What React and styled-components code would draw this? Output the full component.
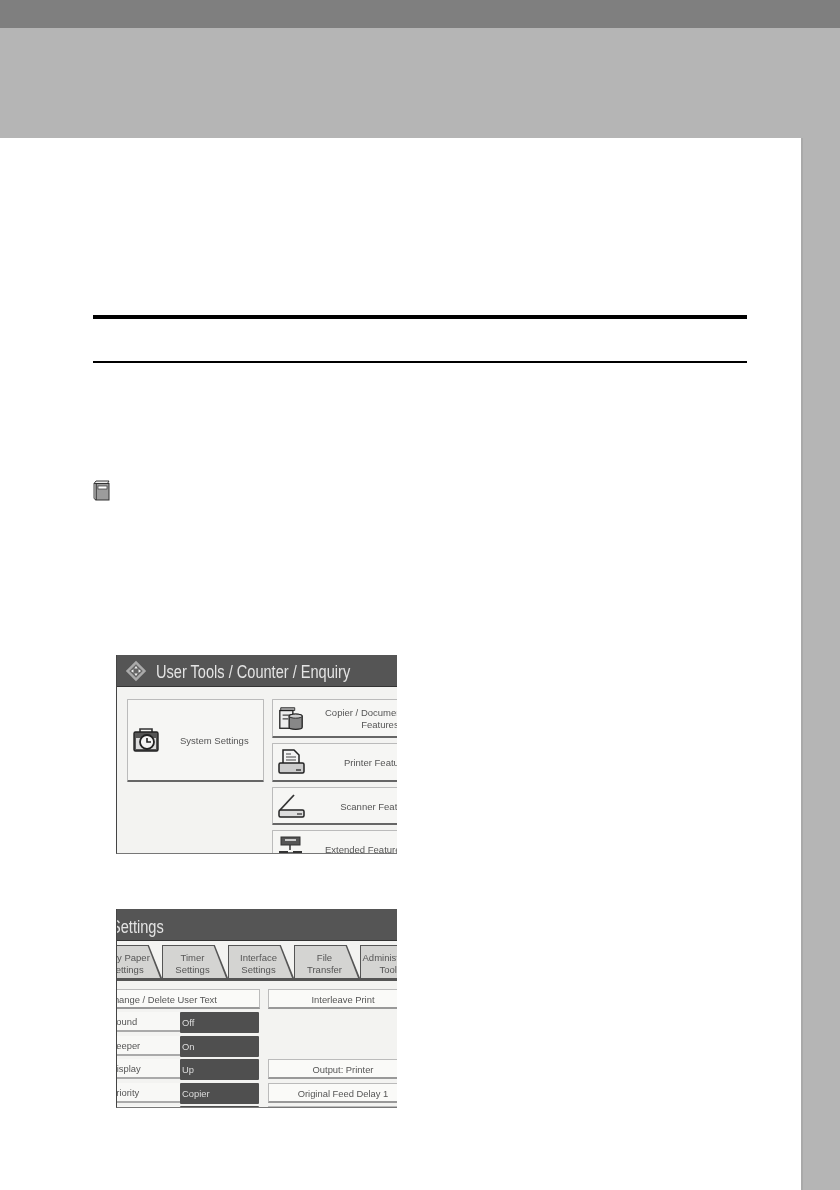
import styled, { createGlobalStyle } from "styled-components";

const Global = createGlobalStyle`
  html, body {
    margin: 0;
    padding: 0;
    background: #fff;
  }
  body {
    font-family: "Liberation Sans", Arial, sans-serif;
  }
`;

const Sheet = styled.div`
  width: 840px;
  height: 1190px;
  display: flex;
  flex-direction: column;
  overflow: hidden;
`;

const TopBar = styled.div`
  height: 28px;
  flex: none;
  background: #7f7f7f;
`;

const Band = styled.div`
  height: 110px;
  flex: none;
  background: #b5b5b5;
`;

const Body = styled.div`
  flex: 1;
  display: flex;
`;

const Page = styled.main`
  width: 654px;
  padding: 177px 54px 0 93px;
`;

const Side = styled.aside`
  flex: 1;
  background: #b5b5b5;
  border-left: 2px solid #a9a9a9;
`;

const Rule = styled.hr`
  margin: 0;
  border: 0;
  background: #000;
  height: ${(p) => p.$h}px;
  margin-bottom: ${(p) => p.$after}px;
`;

const BookIcon = styled.svg`
  display: block;
  width: 17px;
  height: 21px;
  margin-bottom: 154px;
`;

const Shot = styled.section`
  width: 281px;
  height: 199px;
  margin-left: 23px;
  margin-bottom: ${(p) => p.$after || 0}px;
  overflow: hidden;
  background: #f3f3f1;
  border-left: 1px solid #444;
  border-bottom: 1px solid #777;
  box-sizing: border-box;
  filter: blur(0.55px);
`;

const ShotHeader = styled.header`
  height: 32px;
  background: #555;
  border-bottom: 1px solid #333;
  display: flex;
  align-items: center;
  gap: 8px;
  padding-left: ${(p) => p.$pad || 0}px;
  color: #e4e4e4;
  font-size: 18px;
  white-space: nowrap;
  box-sizing: border-box;

  svg {
    flex: none;
  }
`;

const Title = styled.span`
  padding-top: ${(p) => p.$drop || 0}px;
  margin-left: ${(p) => p.$shift || 0}px;
  transform: scaleX(0.81);
  transform-origin: left center;
`;

const MenuGrid = styled.div`
  display: grid;
  grid-template-columns: 137px 160px;
  gap: 5px 8px;
  padding: 12px 0 0 10px;
  grid-template-rows: 39px 39px 38px 38px;
`;

const MenuButton = styled.div`
  grid-row: ${(p) => (p.$tall ? "1 / span 2" : "auto")};
  grid-column: ${(p) => (p.$tall ? "1" : "2")};
  background: #f6f6f4;
  border: 1px solid #bbb;
  border-bottom: 2px solid #666;
  border-radius: 1px;
  display: flex;
  align-items: center;
  gap: 20px;
  padding: 0 ${(p) => (p.$tall ? 20 : 0)}px 0 4px;
  font-size: 9.5px;
  line-height: 12px;
  color: #555;
  white-space: nowrap;
  overflow: hidden;

  svg {
    flex: none;
  }
`;

const MenuLabel = styled.span`
  flex: 1;
  text-align: center;
  padding-top: 2px;
`;

const TabRow = styled.div`
  display: flex;
  margin: 4px 0 0 -21px;
  height: 33px;
  border-bottom: 3px solid #555;
`;

const Tab = styled.div`
  width: 66px;
  flex: none;
  background: #555;
  padding: 1px 0 0 1px;
  box-sizing: border-box;
  clip-path: polygon(0 0, 80% 0, 100% 100%, 0 100%);
`;

const TabFace = styled.div`
  height: 100%;
  background: #d4d4d2;
  color: #555;
  font-size: 9.5px;
  line-height: 12px;
  text-align: center;
  padding: 6px 6px 0 0;
  box-sizing: border-box;
  clip-path: polygon(0 0, 78% 0, 97% 100%, 0 100%);
  white-space: nowrap;
`;

const SettingsGrid = styled.div`
  display: grid;
  grid-template-columns: 196px 150px;
  grid-auto-rows: 20px;
  gap: 3.4px 8px;
  margin: 8px 0 0 -53px;
`;

const Plain = styled.div`
  background: #fafaf8;
  border: 1px solid #bbb;
  border-bottom: 2px solid #999;
  font-size: 9.4px;
  color: #555;
  text-align: center;
  line-height: 19px;
  white-space: nowrap;
  box-sizing: border-box;
  overflow: hidden;
`;

const Toggle = styled.div`
  display: grid;
  grid-template-columns: 116px 79px;
  font-size: 9.4px;
  line-height: 21px;
`;

const ToggleName = styled.div`
  background: #f8f8f6;
  border-bottom: 2px solid #aaa;
  padding-left: 46px;
  color: #555;
  box-sizing: border-box;
  height: 20px;
  line-height: 19px;
`;

const ToggleValue = styled.div`
  background: #4f4f4f;
  color: #ddd;
  padding-left: 2px;
  border-radius: 1px;
`;

const Spacer = styled.div``;

const Logo = () => (
  <svg width="24" height="22" viewBox="0 0 26 26">
    <path d="M13 1l12 12-12 12L1 13z" fill="#aaa" />
    <path d="M13 5l8 8-8 8-8-8z" fill="#666" />
    <path d="M13 7l2 3h-4zM13 19l-2-3h4zM7 13l3-2v4zM19 13l-3 2v-4z" fill="#f2f2f2" />
  </svg>
);

const ClockCase = () => (
  <svg width="28" height="28" viewBox="0 0 28 28">
    <path d="M8 6V3h12v3" fill="none" stroke="#333" strokeWidth="1.6" />
    <rect x="2" y="6" width="24" height="19" rx="1.5" fill="#555" stroke="#222" strokeWidth="1.4" />
    <rect x="4" y="12" width="20" height="11" fill="#ddd" />
    <circle cx="15" cy="16" r="7" fill="#f4f4f4" stroke="#222" strokeWidth="1.8" />
    <path d="M15 12v4h4" fill="none" stroke="#222" strokeWidth="1.6" />
  </svg>
);

const CopierIcon = () => (
  <svg width="28" height="28" viewBox="0 0 28 30">
    <path d="M3 4h15v3H3z" fill="#aaa" stroke="#333" />
    <rect x="2" y="7" width="14" height="19" fill="#eee" stroke="#222" strokeWidth="1.4" />
    <path d="M5 12h8M5 16h6" stroke="#444" strokeWidth="1.4" />
    <path d="M12 13c0-3 14-3 14 0v12c0 3-14 3-14 0z" fill="#888" stroke="#222" strokeWidth="1.4" />
    <ellipse cx="19" cy="13" rx="7" ry="2.2" fill="#ccc" stroke="#222" />
  </svg>
);

const PrinterIcon = () => (
  <svg width="28" height="28" viewBox="0 0 28 28">
    <path d="M6 16V2h11l5 5v9" fill="#f4f4f4" stroke="#222" strokeWidth="1.5" />
    <path d="M9 9h10M9 12h10M9 6h5" stroke="#444" />
    <rect x="2" y="15" width="25" height="10" rx="1.5" fill="#ccc" stroke="#222" strokeWidth="1.5" />
    <path d="M19 22h5" stroke="#333" strokeWidth="1.4" />
  </svg>
);

const ScannerIcon = () => (
  <svg width="28" height="28" viewBox="0 0 28 28">
    <path d="M3 18L17 3" stroke="#333" strokeWidth="1.8" />
    <rect x="2" y="18" width="25" height="7" rx="1.5" fill="#ddd" stroke="#222" strokeWidth="1.5" />
    <path d="M20 22h5" stroke="#444" strokeWidth="1.4" />
  </svg>
);

const ExtendedIcon = () => (
  <svg width="28" height="28" viewBox="0 0 28 28">
    <rect x="4" y="2" width="19" height="8" fill="#555" stroke="#333" />
    <rect x="8" y="4" width="11" height="2" fill="#ccc" />
    <path d="M13 10v5M4 18h20" stroke="#333" strokeWidth="1.5" />
    <rect x="2" y="16" width="9" height="8" fill="#333" />
    <rect x="16" y="16" width="9" height="8" fill="#333" />
  </svg>
);

export default function App() {
  return (
    <Sheet>
      <Global />
      <TopBar />
      <Band />
      <Body>
        <Page>
          <Rule $h={4} $after={42} />
          <Rule $h={2} $after={117} />
          <BookIcon viewBox="0 0 17 21">
            <path d="M1 3.5L3 1h13l-1.5 2.5z" fill="#eee" stroke="#222" strokeWidth="0.9" />
            <rect x="3" y="3.5" width="13" height="16.5" fill="#9c9c9c" stroke="#333" />
            <path d="M1 3.5v15L3 20V3.5z" fill="#ddd" stroke="#333" strokeWidth="0.9" />
            <rect x="5" y="6" width="9" height="3" fill="#fff" stroke="#333" strokeWidth="0.7" />
          </BookIcon>

          <Shot $after={55}>
            <ShotHeader $pad={7}>
              <Logo />
              <Title $drop={3}>User Tools / Counter / Enquiry</Title>
            </ShotHeader>
            <MenuGrid>
              <MenuButton $tall>
                <ClockCase />
                <MenuLabel>System Settings</MenuLabel>
              </MenuButton>
              <MenuButton>
                <CopierIcon />
                <MenuLabel>Copier / Document Server<br />Features</MenuLabel>
              </MenuButton>
              <MenuButton>
                <PrinterIcon />
                <MenuLabel>Printer Features</MenuLabel>
              </MenuButton>
              <MenuButton>
                <ScannerIcon />
                <MenuLabel>Scanner Features</MenuLabel>
              </MenuButton>
              <MenuButton>
                <ExtendedIcon />
                <MenuLabel>Extended Feature Settings</MenuLabel>
              </MenuButton>
            </MenuGrid>
          </Shot>

          <Shot>
            <ShotHeader>
              <Title $drop={6} $shift={-6}>Settings</Title>
            </ShotHeader>
            <TabRow>
              <Tab><TabFace>Tray Paper<br />Settings</TabFace></Tab>
              <Tab><TabFace>Timer<br />Settings</TabFace></Tab>
              <Tab><TabFace>Interface<br />Settings</TabFace></Tab>
              <Tab><TabFace>File<br />Transfer</TabFace></Tab>
              <Tab><TabFace>Administrator<br />Tools</TabFace></Tab>
            </TabRow>
            <SettingsGrid>
              <Plain>Change / Delete User Text</Plain>
              <Plain>Interleave Print</Plain>
              <Toggle>
                <ToggleName>Sound</ToggleName>
                <ToggleValue>Off</ToggleValue>
              </Toggle>
              <Spacer />
              <Toggle>
                <ToggleName>Beeper</ToggleName>
                <ToggleValue>On</ToggleValue>
              </Toggle>
              <Spacer />
              <Toggle>
                <ToggleName>Display</ToggleName>
                <ToggleValue>Up</ToggleValue>
              </Toggle>
              <Plain>Output: Printer</Plain>
              <Toggle>
                <ToggleName>Priority</ToggleName>
                <ToggleValue>Copier</ToggleValue>
              </Toggle>
              <Plain>Original Feed Delay 1</Plain>
              <Toggle>
                <ToggleName />
                <ToggleValue />
              </Toggle>
              <Plain />
            </SettingsGrid>
          </Shot>
        </Page>
        <Side />
      </Body>
    </Sheet>
  );
}
